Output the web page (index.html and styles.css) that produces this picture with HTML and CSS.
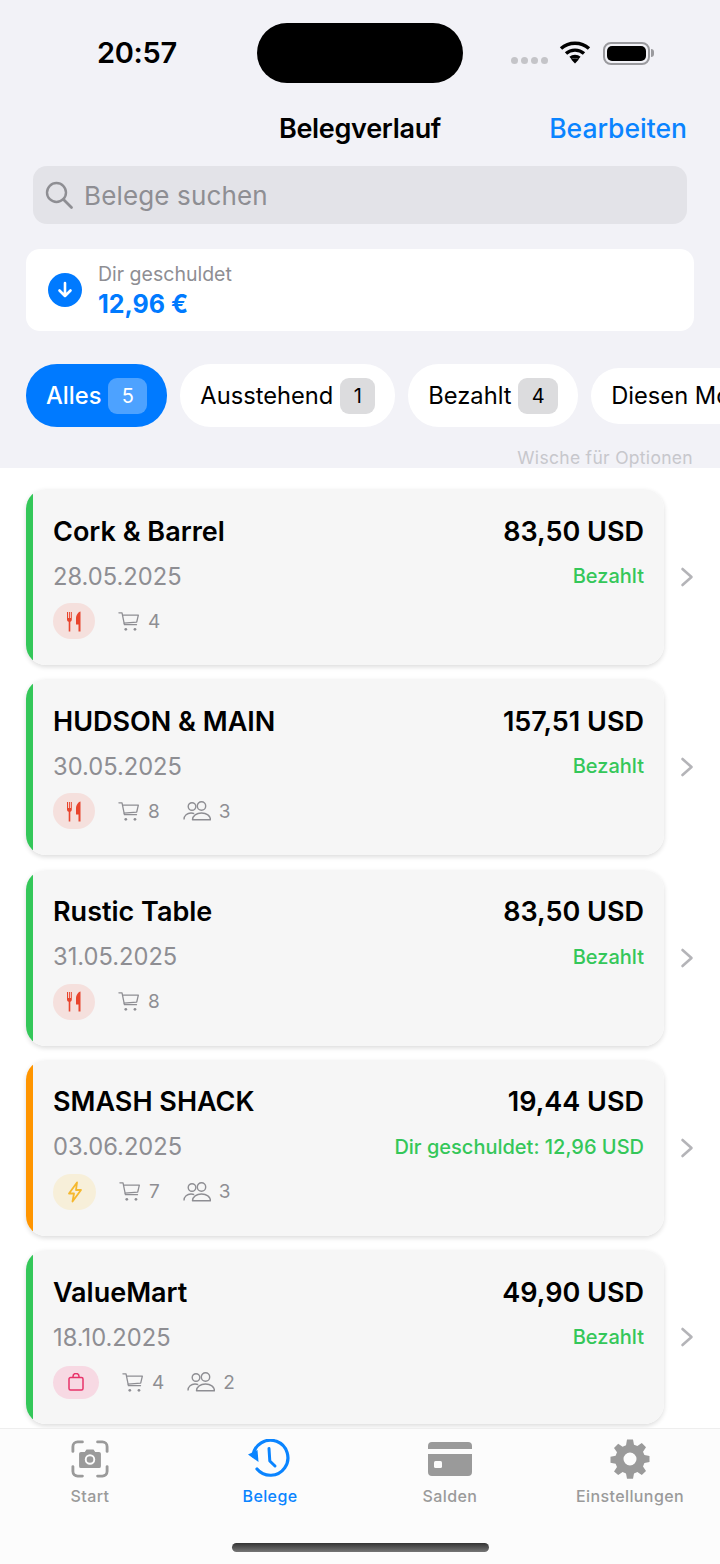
FILE: index.html
```html
<!DOCTYPE html>
<html lang="de">
<head>
    <meta charset="UTF-8">
    <meta name="viewport" content="width=device-width, initial-scale=1.0">
    <title>Belegverlauf</title>
    <link rel="stylesheet" href="styles.css">
</head>
<body>
<svg class="sprites" width="0" height="0">
    <symbol id="cart" viewBox="0 0 24 22"><path d="M1 1.500h3.400l2.600 13h13.200M4.900 4h17.300l-1.800 7.600-14 1.200" fill="none" stroke="currentColor" stroke-width="1.400" stroke-linejoin="round" stroke-linecap="round"/><circle cx="8.500" cy="19.500" r="1.500" fill="currentColor"/><circle cx="18.500" cy="19.500" r="1.500" fill="currentColor"/></symbol>
    <symbol id="people" viewBox="0 0 28 20"><g fill="none" stroke="currentColor" stroke-width="1.400"><circle cx="9" cy="5.500" r="3.800"/><circle cx="18.500" cy="5" r="4.200"/><path d="M1 18.500c0-4 3.200-6.500 7-6.500 1.200 0 2.300.2 3.200.7"/><path d="M9.500 18.800c0-4 4-6.800 9-6.800s9 2.800 9 6.800z" stroke-linejoin="round"/></g></symbol>
    <symbol id="fork" viewBox="0 0 14 21"><g fill="currentColor"><path d="M0 1h1v6h.9V1h1v6h.9V1h1v7.500c0 1.200-.6 2-1.500 2.300V20.500H1.700V10.800C.7 10.500 0 9.700 0 8.500z"/><path d="M13.500 .5v20h-2v-7H9V7.500C9 4 11.200 1 13.500 .5z"/></g></symbol>
    <symbol id="chevron" viewBox="0 0 14 20"><path d="M2.500 2l9 8-9 8" fill="none" stroke="currentColor" stroke-width="2.600" stroke-linecap="round" stroke-linejoin="round"/></symbol>
</svg>

<div class="screen">
    <header class="top">
        <div class="status-bar">
            <span class="time">20:57</span>
            <div class="island"></div>
            <div class="status-icons">
                <div class="signal"><i></i><i></i><i></i><i></i></div>
                <svg class="wifi" width="32" height="24" viewBox="0 0 32 24"><path d="M2 8.500c7.800-7 20.200-7 28 0M7 13.500c5-4.500 13-4.500 18 0M11.500 18c2.500-2.200 6.500-2.200 9 0" fill="none" stroke="#000" stroke-width="3.400" stroke-linecap="butt"/><path d="M16 23.500l-3.800-4c2.200-1.600 5.400-1.600 7.600 0z" fill="#000"/></svg>
                <div class="battery"><div class="battery-fill"></div></div>
                <div class="battery-cap"></div>
            </div>
        </div>

        <nav class="nav-bar">
            <h1>Belegverlauf</h1>
            <a class="edit">Bearbeiten</a>
        </nav>

        <div class="search">
            <svg width="30" height="30" viewBox="0 0 30 30"><circle cx="12.500" cy="12.500" r="9.500" fill="none" stroke="#8e8e93" stroke-width="2.400"/><path d="M19.500 19.500l8 8" stroke="#8e8e93" stroke-width="2.800" stroke-linecap="round"/></svg>
            <span>Belege suchen</span>
        </div>

        <div class="owed">
            <div class="owed-icon">
                <svg width="18" height="20" viewBox="0 0 18 20"><path d="M9 3v13M3.500 10.500L9 16l5.500-5.500" fill="none" stroke="#fff" stroke-width="2.600" stroke-linecap="round" stroke-linejoin="round"/></svg>
            </div>
            <div class="owed-text">
                <div class="owed-label">Dir geschuldet</div>
                <div class="owed-sum">12,96 €</div>
            </div>
        </div>

        <div class="chips">
            <div class="chip active">Alles <span class="count">5</span></div>
            <div class="chip">Ausstehend <span class="count">1</span></div>
            <div class="chip">Bezahlt <span class="count">4</span></div>
            <div class="chip small">Diesen Monat</div>
        </div>

        <div class="hint">Wische für Optionen</div>
    </header>

    <main class="list">
        <div class="row">
            <div class="card">
                <div class="line">
                    <span class="name">Cork &amp; Barrel</span>
                    <span class="sum">83,50 USD</span>
                </div>
                <div class="line line-date">
                    <span class="date">28.05.2025</span>
                    <span class="state">Bezahlt</span>
                </div>
                <div class="meta">
                    <span class="tag food"><svg width="14" height="21"><use href="#fork"/></svg></span>
                    <span class="meta-item"><svg width="22" height="21"><use href="#cart"/></svg>4</span>
                </div>
            </div>
            <svg class="chevron" width="14" height="20"><use href="#chevron"/></svg>
        </div>

        <div class="row">
            <div class="card">
                <div class="line">
                    <span class="name">HUDSON &amp; MAIN</span>
                    <span class="sum">157,51 USD</span>
                </div>
                <div class="line line-date">
                    <span class="date">30.05.2025</span>
                    <span class="state">Bezahlt</span>
                </div>
                <div class="meta">
                    <span class="tag food"><svg width="14" height="21"><use href="#fork"/></svg></span>
                    <span class="meta-item"><svg width="22" height="21"><use href="#cart"/></svg>8</span>
                    <span class="meta-item"><svg width="28" height="20"><use href="#people"/></svg>3</span>
                </div>
            </div>
            <svg class="chevron" width="14" height="20"><use href="#chevron"/></svg>
        </div>

        <div class="row">
            <div class="card">
                <div class="line">
                    <span class="name">Rustic Table</span>
                    <span class="sum">83,50 USD</span>
                </div>
                <div class="line line-date">
                    <span class="date">31.05.2025</span>
                    <span class="state">Bezahlt</span>
                </div>
                <div class="meta">
                    <span class="tag food"><svg width="14" height="21"><use href="#fork"/></svg></span>
                    <span class="meta-item"><svg width="22" height="21"><use href="#cart"/></svg>8</span>
                </div>
            </div>
            <svg class="chevron" width="14" height="20"><use href="#chevron"/></svg>
        </div>

        <div class="row">
            <div class="card pending">
                <div class="line">
                    <span class="name">SMASH SHACK</span>
                    <span class="sum">19,44 USD</span>
                </div>
                <div class="line line-date">
                    <span class="date">03.06.2025</span>
                    <span class="state">Dir geschuldet: 12,96 USD</span>
                </div>
                <div class="meta">
                    <span class="tag fast"><svg width="16" height="22" viewBox="0 0 16 22"><path d="M10 1.500L2 12.500h5L5.500 20.500l8.500-11.500H9z" fill="none" stroke="currentColor" stroke-width="1.800" stroke-linejoin="round"/></svg></span>
                    <span class="meta-item"><svg width="22" height="21"><use href="#cart"/></svg>7</span>
                    <span class="meta-item"><svg width="28" height="20"><use href="#people"/></svg>3</span>
                </div>
            </div>
            <svg class="chevron" width="14" height="20"><use href="#chevron"/></svg>
        </div>

        <div class="row">
            <div class="card short">
                <div class="line">
                    <span class="name">ValueMart</span>
                    <span class="sum">49,90 USD</span>
                </div>
                <div class="line line-date">
                    <span class="date">18.10.2025</span>
                    <span class="state">Bezahlt</span>
                </div>
                <div class="meta">
                    <span class="tag shop"><svg width="16" height="18" viewBox="0 0 16 18"><path d="M2.500 4.500h11a1.500 1.500 0 0 1 1.500 1.500v9.500a1.500 1.500 0 0 1-1.500 1.500h-11A1.500 1.500 0 0 1 1 15.500V6a1.500 1.500 0 0 1 1.500-1.500zM5 4.500V3.500a3 3 0 0 1 6 0v1" fill="none" stroke="currentColor" stroke-width="1.500"/></svg></span>
                    <span class="meta-item"><svg width="22" height="21"><use href="#cart"/></svg>4</span>
                    <span class="meta-item"><svg width="28" height="20"><use href="#people"/></svg>2</span>
                </div>
            </div>
            <svg class="chevron" width="14" height="20"><use href="#chevron"/></svg>
        </div>
    </main>

    <footer class="tabs">
        <div class="tab">
            <svg width="38" height="40" viewBox="0 0 40 40"><path d="M2 12V7a5 5 0 0 1 5-5h5M28 2h5a5 5 0 0 1 5 5v5M38 28v5a5 5 0 0 1-5 5h-5M12 38H7a5 5 0 0 1-5-5v-5" fill="none" stroke="currentColor" stroke-width="3" stroke-linecap="round"/><path fill-rule="evenodd" d="M10.500 12.500h4l1.800-2.500h7.400l1.800 2.500h4a2 2 0 0 1 2 2v13a2 2 0 0 1-2 2h-19a2 2 0 0 1-2-2v-13a2 2 0 0 1 2-2zM20 15a5.500 5.500 0 1 0 0 11 5.500 5.500 0 0 0 0-11zm0 2a3.500 3.500 0 1 1 0 7 3.500 3.500 0 0 1 0-7z" fill="currentColor"/></svg>
            <span>Start</span>
        </div>
        <div class="tab current">
            <svg width="44" height="40" viewBox="0 0 44 40"><path d="M5 17A17.500 17.500 0 1 1 9 30" fill="none" stroke="currentColor" stroke-width="3.200" stroke-linecap="round"/><path d="M0 15.500L9.500 11l1 12z" fill="currentColor"/><path d="M21 9.500l.8 12.500 5.200 5" fill="none" stroke="currentColor" stroke-width="3" stroke-linecap="round" stroke-linejoin="round"/></svg>
            <span>Belege</span>
        </div>
        <div class="tab">
            <svg width="44" height="40" viewBox="0 -3 44 40"><path d="M4 0h36a4 4 0 0 1 4 4v3H0V4a4 4 0 0 1 4-4zM0 12h44v18a4 4 0 0 1-4 4H4a4 4 0 0 1-4-4z" fill="currentColor"/><rect x="6" y="19" width="8" height="7" rx="1.500" fill="#fcfcfc"/></svg>
            <span>Salden</span>
        </div>
        <div class="tab">
            <svg width="40" height="40" viewBox="0 0 40 40"><path fill="currentColor" fill-rule="evenodd" d="M17 0.500h6l1 5.200 3.400 1.400 4.400-3 4.200 4.200-3 4.400 1.400 3.400 5.100 1v6l-5.100 1-1.400 3.400 3 4.400-4.200 4.200-4.400-3-3.400 1.400-1 5.200h-6l-1-5.200-3.400-1.400-4.400 3L4 32.500l3-4.400-1.400-3.400-5.100-1v-6l5.100-1L7 13.300l-3-4.400L8.200 4.700l4.400 3L16 6.300zM20 13.500a6.500 6.500 0 1 0 0 13 6.500 6.500 0 0 0 0-13z"/></svg>
            <span>Einstellungen</span>
        </div>
        <div class="home-bar"></div>
    </footer>
</div>
</body>
</html>
```

FILE: styles.css
```css
* {
    box-sizing: border-box;
}
body {
    margin: 0;
    background-color: #fff;
    font-family: Inter, "Noto Sans", sans-serif;
    color: #000;
}
.sprites {
    position: absolute;
}
.screen {
    width: 720px;
    height: 1564px;
    overflow: hidden;
    display: flex;
    flex-direction: column;
}

/* top area */
.top {
    height: 468px;
    background-color: #f2f2f7;
    flex-shrink: 0;
}
.status-bar {
    height: 106px;
    padding: 23px 0 0 97px;
    display: flex;
    align-items: flex-start;
}
.time {
    width: 160px;
    flex-shrink: 0;
    font-size: 29px;
    font-weight: 600;
    line-height: 60px;
    letter-spacing: -0.3px;
}
.island {
    width: 206px;
    height: 60px;
    flex-shrink: 0;
    border-radius: 30px;
    background-color: #000;
}
.status-icons {
    display: flex;
    align-items: center;
    height: 60px;
    margin-left: 48px;
}
.signal {
    display: flex;
    gap: 3px;
    margin: 14px 11px 0 0;
}
.signal i {
    width: 7px;
    height: 7px;
    border-radius: 50%;
    background-color: #c4c4c8;
}
.wifi {
    margin: -3px 12px 0 0;
}
.battery {
    width: 47px;
    height: 23px;
    border: 2px solid #9a9a9e;
    border-radius: 8px;
    padding: 2px;
}
.battery-fill {
    height: 100%;
    background-color: #000;
    border-radius: 5px;
}
.battery-cap {
    width: 3px;
    height: 8px;
    margin-left: 1px;
    border-radius: 0 3px 3px 0;
    background-color: #9a9a9e;
}
.nav-bar {
    height: 44px;
    margin-bottom: 16px;
    position: relative;
    display: flex;
    justify-content: flex-end;
    align-items: center;
    padding-right: 33px;
}
.nav-bar h1 {
    position: absolute;
    left: 0;
    right: 0;
    margin: 0;
    text-align: center;
    font-size: 27px;
    font-weight: 600;
    letter-spacing: -0.3px;
}
.edit {
    font-size: 26.500px;
    font-weight: 500;
    color: #0a84ff;
}
.search {
    height: 58px;
    margin: 0 33px 25px;
    padding: 0 11px;
    background-color: #e3e3e8;
    border-radius: 14px;
    display: flex;
    align-items: center;
    gap: 10px;
    font-size: 26px;
    letter-spacing: 0.15px;
    color: #8e8e93;
}
.owed {
    height: 82px;
    margin: 0 26px 33px;
    padding: 0 22px;
    background-color: #fff;
    border-radius: 14px;
    display: flex;
    align-items: center;
    gap: 16px;
}
.owed-icon {
    width: 34px;
    height: 34px;
    border-radius: 50%;
    background-color: #007aff;
    display: flex;
    align-items: center;
    justify-content: center;
}
.owed-text {
    padding-top: 3px;
}
.owed-label {
    font-size: 19.500px;
    line-height: 22px;
    color: #8e8e93;
}
.owed-sum {
    margin-top: 3px;
    font-size: 25px;
    font-weight: 700;
    line-height: 32px;
    color: #007aff;
}
.chips {
    display: flex;
    align-items: center;
    gap: 13px;
    padding-left: 26px;
    height: 63px;
    overflow: hidden;
}
.chip {
    height: 63px;
    flex-shrink: 0;
    padding: 0 20px;
    border-radius: 31px;
    background-color: #fff;
    display: flex;
    align-items: center;
    gap: 7px;
    font-size: 23.700px;
}
.chip.small {
    height: 56px;
    border-radius: 28px;
}
.chip.active {
    background-color: #007aff;
    color: #fff;
    font-weight: 500;
}
.count {
    height: 36px;
    padding: 0 13.400px;
    border-radius: 9px;
    background-color: #dcdcde;
    display: flex;
    align-items: center;
    justify-content: center;
    font-size: 20px;
    font-weight: 400;
}
.active .count {
    background-color: #4da2ff;
}
.hint {
    margin-top: 20px;
    padding-right: 27px;
    text-align: right;
    font-size: 17.500px;
    line-height: 22px;
    color: #c7c7cc;
    letter-spacing: 0.3px;
}

/* list */
.list {
    flex: 1;
    padding: 21px 26px 0;
    display: flex;
    flex-direction: column;
    gap: 14.250px;
    overflow: hidden;
}
.row {
    display: flex;
    align-items: center;
    gap: 16px;
    flex-shrink: 0;
}
.chevron {
    color: #b4b4b8;
}
.card {
    width: 638px;
    height: 176px;
    padding: 22px 20px 0 27px;
    background: linear-gradient(to right, #34c759 7px, #f6f6f6 7px);
    border-radius: 20px;
    box-shadow: 0 2px 5px rgba(0, 0, 0, 0.14);
}
.card.pending {
    background: linear-gradient(to right, #ff9500 7px, #f6f6f6 7px);
}
.card.short {
    height: 174px;
}
.line {
    display: flex;
    justify-content: space-between;
    align-items: center;
    height: 40px;
}
.line-date {
    height: 44px;
    margin-top: 3px;
}
.name {
    font-size: 27px;
    font-weight: 600;
}
.sum {
    font-size: 27px;
    font-weight: 600;
}
.date {
    font-size: 23.700px;
    color: #8e8e93;
}
.state {
    font-size: 20px;
    font-weight: 500;
    color: #34c759;
}
.meta {
    display: flex;
    align-items: center;
    gap: 23px;
    height: 36px;
    margin-top: 5px;
    font-size: 19px;
    color: #8e8e93;
}
.tag {
    width: 42px;
    height: 36px;
    border-radius: 18px;
    display: flex;
    align-items: center;
    justify-content: center;
}
.tag.food {
    background-color: #f5e0dd;
    color: #e8452e;
}
.tag.fast {
    width: 43px;
    background-color: #f7efd9;
    color: #f5b82e;
}
.tag.shop {
    width: 46px;
    height: 33px;
    background-color: #f7d9e3;
    color: #e8336a;
}
.meta-item {
    display: flex;
    align-items: center;
    gap: 8px;
}

/* tab bar */
.tabs {
    height: 136px;
    flex-shrink: 0;
    position: relative;
    background-color: #fcfcfc;
    border-top: 1px solid #eeeeee;
    display: grid;
    grid-template-columns: repeat(4, 180px);
}
.tab {
    padding-top: 10px;
    display: flex;
    flex-direction: column;
    align-items: center;
    color: #9a9a9a;
    font-size: 16px;
    font-weight: 500;
    letter-spacing: 0.4px;
}
.tab span {
    margin-top: 6px;
    line-height: 22px;
}
.tab.current {
    color: #0a84ff;
}
.home-bar {
    position: absolute;
    left: 232px;
    bottom: 12px;
    width: 257px;
    height: 9px;
    border-radius: 5px;
    background: linear-gradient(#333, #777);
}
```
